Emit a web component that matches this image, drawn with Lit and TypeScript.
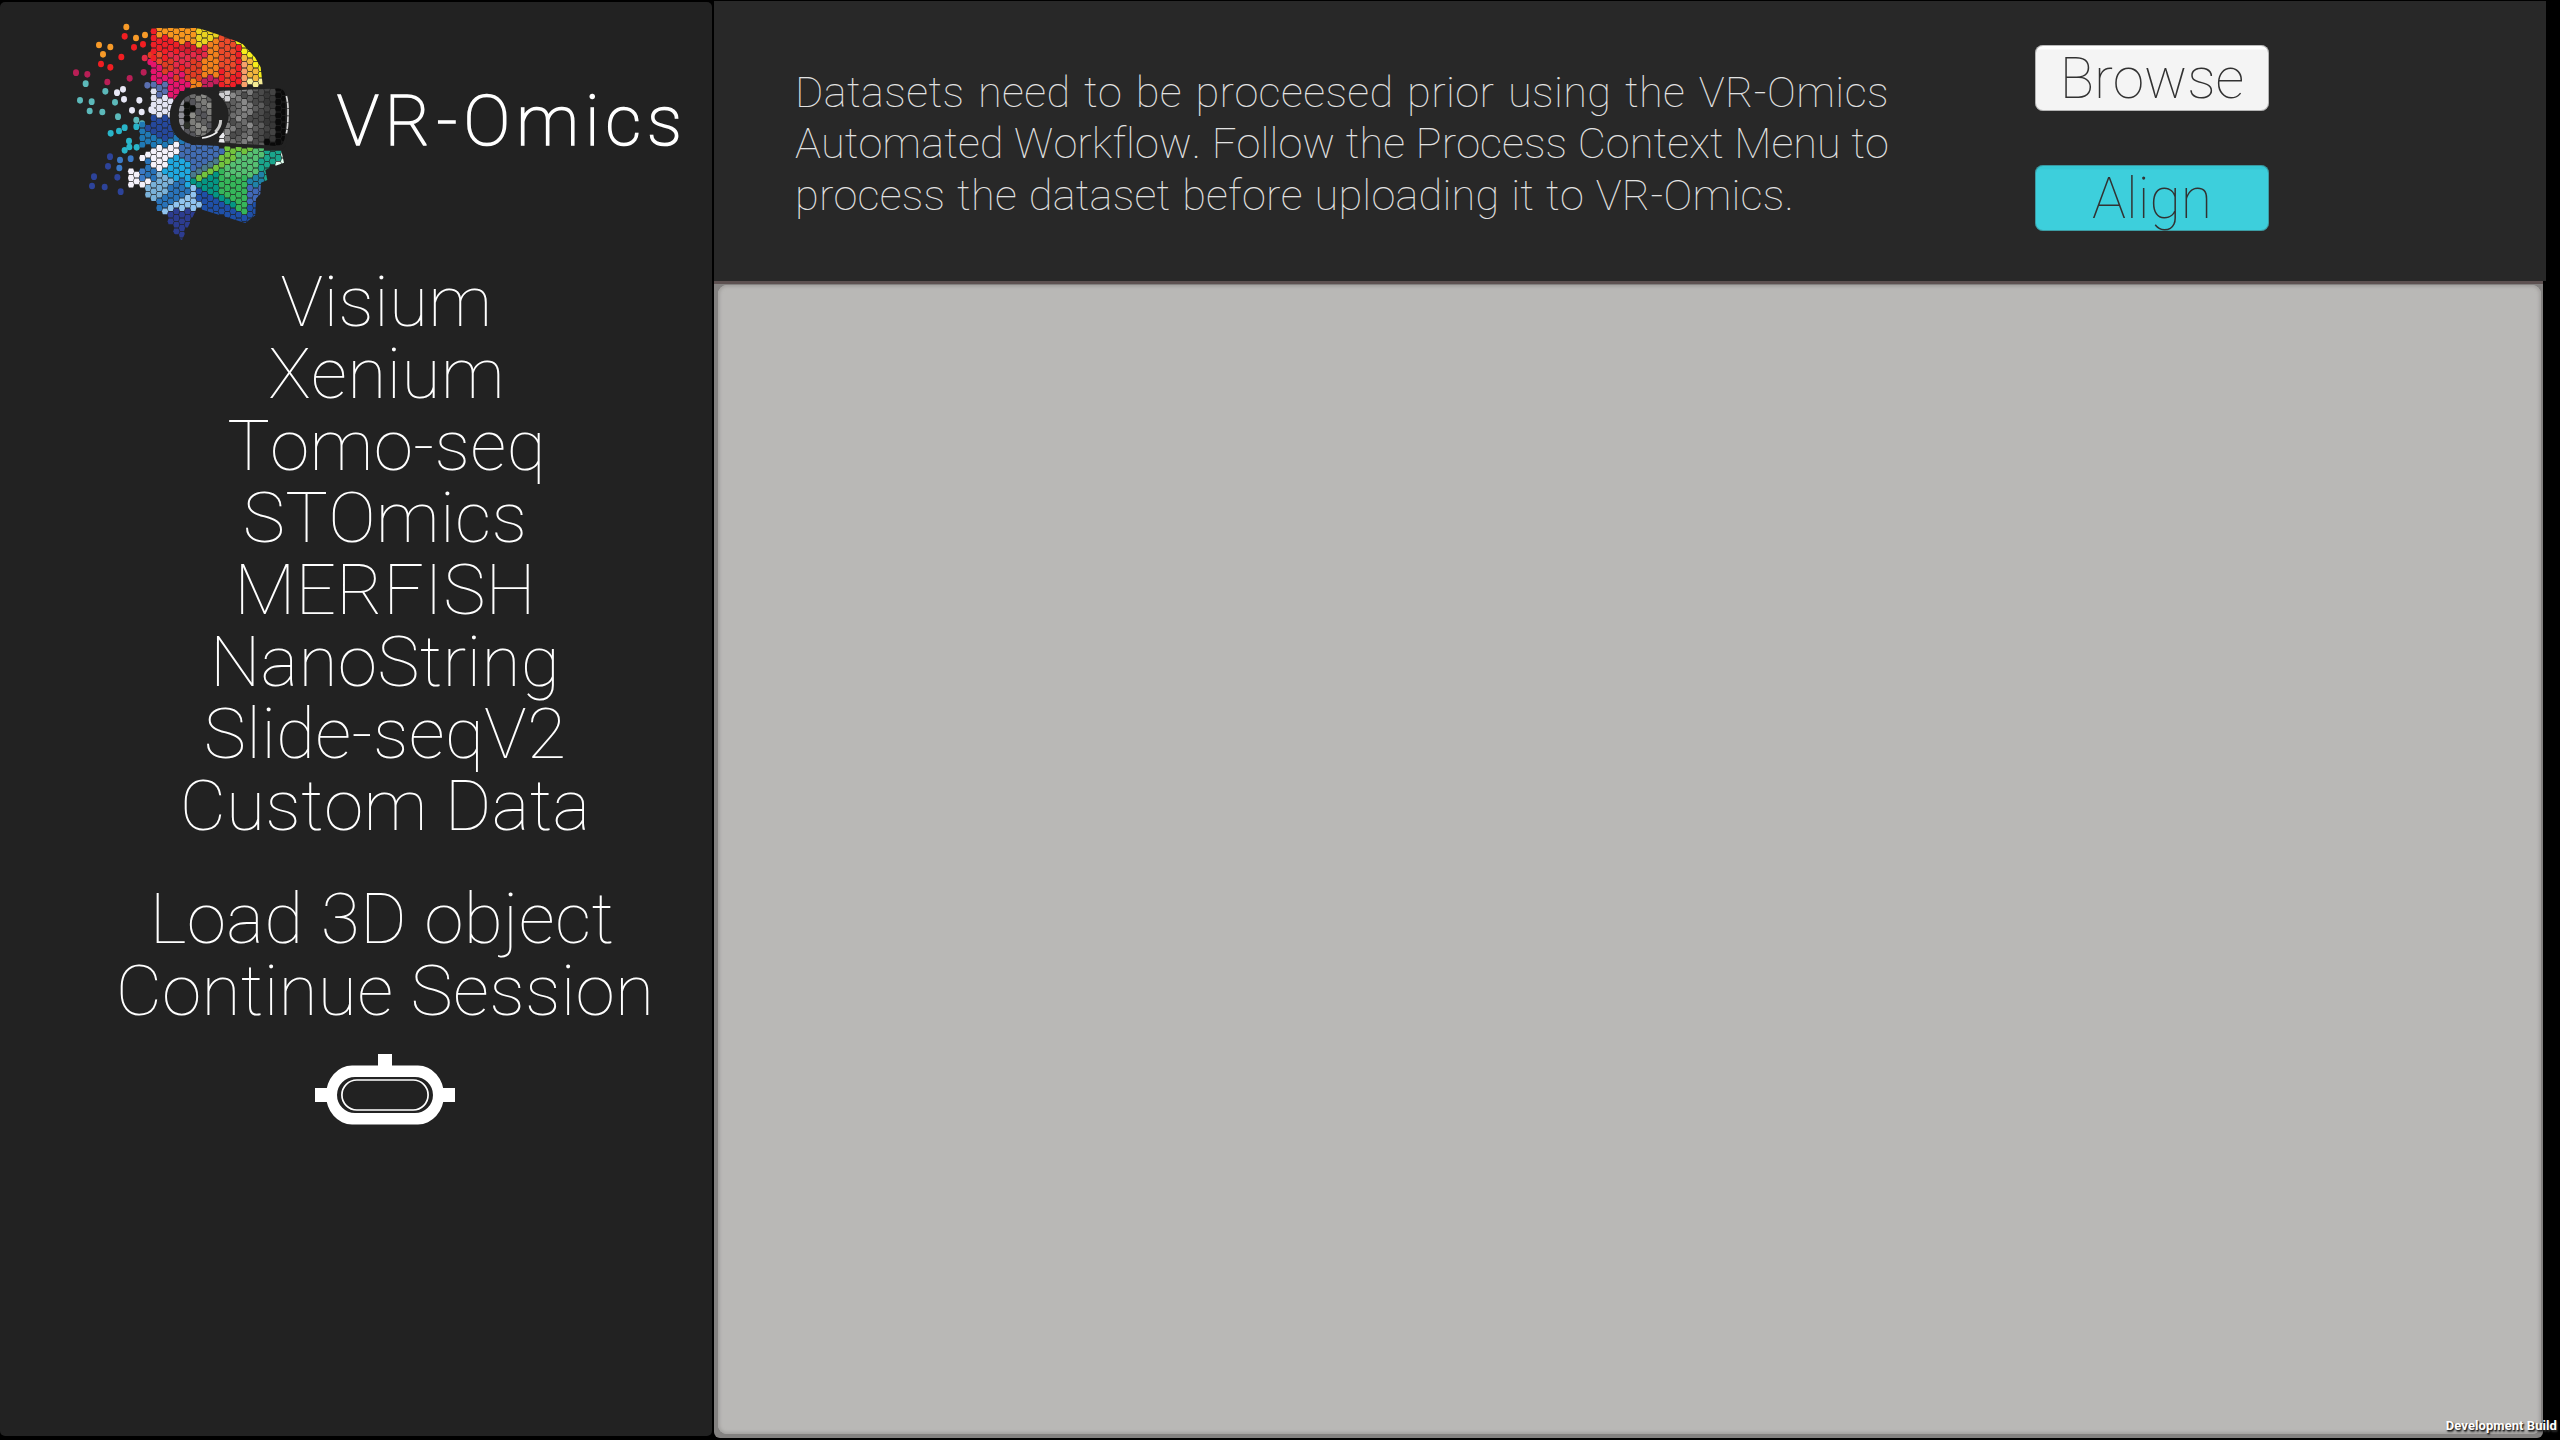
import { LitElement, html, svg, css } from "lit";
import { customElement } from "lit/decorators.js";

const PALETTE: Record<string, string> = {
  O: "#f7961e", Y: "#ead31f", R: "#ef1f27", C: "#e42a48", V: "#d31d2e", E: "#e03c24",
  T: "#f2801c", X: "#ec4a2a", P: "#f9a06a", G: "#f2b63c", L: "#f6ee1a", c: "#f5ec96",
  M: "#e5156c", m: "#c51f5b", N: "#e4e5f4", B: "#5a6fb0", D: "#25489c", H: "#2079b6",
  U: "#416cb2", A: "#f5f2fb", S: "#1fa8e0", Q: "#7ab2da", K: "#2973b9", J: "#90c4f0",
  I: "#2c3c90", s: "#4a7a8c", Z: "#049684", F: "#72c43e", g: "#55c072", e: "#35b65a",
  t: "#1aa58c", W: "#1f50a8", b: "#4068b8", a: "#1f82a8", w: "#e0fff0", k: "#3c7ac6",
};

/* One line per column: x, first y, then colour + the y it reaches ("." is a gap). */
const COLUMNS = `
213 474 A535
230 484 A525
247 345 H410 .432 A452 .474 k512 A536
264 215 .335 D362 H410 .422 A441 .450 K508 A524 Q570
281 50 O64 R148 M210 B228 N306 .312 D366 H412 A478 K508 Q574
298 50 O80 R130 X172 M218 B260 N318 D386 H412 A480 Q560 K595
315 50 O72 R150 E192 M216 B262 N316 D386 H410 A470 S488 Q556 K595 J615
332 50 O90 R128 C150 E190 M264 N316 D378 H400 A452 S496 Q532 K580 J604 I650
349 50 O104 R132 C188 E208 M270 .360 H388 A432 S512 K568 J604 I675
366 50 O100 V128 C156 R190 M248 .370 H402 U438 S512 K568 J602 I695
383 50 O104 V136 C168 E218 M240 .395 U460 S530 K554 J592 I660
400 50 O98 V118 C150 E208 T240 .395 U482 s504 Z526 J598 I630
417 50 O58 Y118 V132 C150 E208 T232 .400 U470 s490 F512 Z534 W572 J590
434 56 Y114 C140 T206 m236 .400 U464 s486 F508 Z544 W610
451 60 Y104 T192 m232 .400 U446 s468 F502 Z556 W610
468 66 Y78 T200 m230 .405 U438 s458 F490 Z566 W615
485 70 X168 R230 .405 U426 F482 e560 Z582 W620
502 76 X216 R236 .405 F464 g500 e564 Z588 W625
519 82 X200 R236 .405 F456 g494 e580 Z590 W635
536 92 L110 R230 .405 F432 g500 e598 W640
553 100 L130 G150 P228 .405 F430 g500 e616 W645
570 110 L152 G208 c228 .405 F420 g506 a530 b586 W640
587 120 L170 G206 c228 .405 g496 a530 b576 W625
604 140 L196 c228 .405 g440 t494 a522 b560
621 405 t510
638 405 t472
655 405 t458 w474
672 405 w465`.trim().split("\n").map((l) => l.split(" "));

const DOTS: [string, string][] = [
  ["#f79a28", "199,51 228,84 255,75 117,105 151,111 129,133"],
  ["#f01e22", "194,79 222,112 249,103 184,141 123,162 151,172"],
  ["#e32a45", "254,144"], ["#de4020", "272,135"], ["#e3156c", "271,156"],
  ["#b81f56", "48,188 82,193 142,216 209,205 251,187"],
  ["#5cb9ba", "77,221 136,244 60,271 95,275 165,277 89,303 127,306 174,320 229,330 246,341"],
  ["#e8e8f6", "189,238 171,248 192,268 238,271 216,301 245,306 274,299"],
  ["#29b5c9", "229,350 194,353 177,363 152,370 207,393 208,411 194,421 230,412"],
  ["#2d4399", "150,440 144,469 102,500 96,528 134,531 182,545 172,502"],
  ["#3c7ac6", "212,446 180,450 178,474"],
  ["#5a6fb0", "262,226"],
];

const hex = (x: number, y: number, fill: string) =>
  svg`<path d="M${x - 9.2} ${y}l2.8 -8.8h12.8l2.8 8.8l-2.8 8.8h-12.8z" fill=${fill}></path>`;

function mosaic() {
  const cells: unknown[] = [];
  COLUMNS.forEach(([x, start, ...runs], i) => {
    for (let y = (i % 2 ? 14 : 4) + 40; y < 700; y += 20) {
      if (y < +start - 6) continue;
      const run = runs.find((r) => y < +r.slice(1));
      if (!run || run[0] === ".") continue;
      cells.push(hex(+x, y, PALETTE[run[0]]));
    }
  });
  return cells;
}

const GREYS = ["#7c7c7c", "#5e5e5e", "#8a8a8a", "#4c4c4c", "#6c6c6c"];
function visor() {
  const cells: unknown[] = [];
  for (let i = 0; i < 13; i++) {
    const x = 485 + i * 17;
    for (let j = 0; j < 10; j++) {
      const y = 236 + j * 20 + (i % 2 ? 10 : 0);
      let fill = GREYS[(i * 3 + j * j + (j >> 1)) % 5];
      if (i < 2 && j < 2) fill = "#cfcfd2";
      else if (i < 1 && j > 5) fill = "#ececf0";
      else if (i > 9 || (i > 7 && j > 7)) fill = "#0a0a0a";
      else if (i > 7) fill = j % 3 ? "#383838" : "#444";
      else if (i > 5) fill = (i + j) % 3 ? "#4a4a4a" : "#5c5c5c";
      cells.push(hex(x, y, fill));
    }
  }
  return cells;
}

const LENS = ["#606060", "#7d7d7a", "#55555a", "#8c8c88", "#6c6c6c"];
function lens() {
  const cells: unknown[] = [];
  for (let i = 0; i < 6; i++) {
    for (let j = 0; j < 8; j++) {
      const x = 364 + i * 17, y = 256 + j * 20 + (i % 2 ? 10 : 0);
      let fill = LENS[(i * 2 + j * 3) % 5];
      if (i === 0) fill = "#8e8f96";
      if ((i === 1 && j > 0 && j < 4) || (i === 2 && j === 2)) fill = "#0d0f0c";
      if (i === 1 && j === 4) fill = "#2c3028";
      cells.push(hex(x, y, fill));
    }
  }
  return cells;
}

@customElement("vr-logo")
class VrLogo extends LitElement {
  static styles = css`
    :host { display: block; width: 240px; height: 240px; }
    svg { display: block; }
  `;
  render() {
    return html`<svg width="240" height="240" viewBox="0 0 720 720">
      <defs>
        <clipPath id="head"><path d="M200 54H414L470 72L526 92L548 102L585 142L602 172L608 224L612 400L612 422L664 422L672 458L628 474L616 480L622 510L603 518L601 552L588 566L586 616L556 639L420 597L404 608L366 690L354 684L256 566L254 534H200Z"></path></clipPath>
        <clipPath id="visor"><path d="M462 244L655 235Q676 236 677 262L676 370Q674 410 652 408L462 396Q505 350 506 318Q506 275 462 244Z"></path></clipPath>
        <clipPath id="lens"><path d="M455 268V358Q440 380 406 381Q356 370 355 316Q358 256 406 252Q436 250 455 268Z"></path></clipPath>
      </defs>
      ${DOTS.map(([c, pts]) => pts.split(" ").map((p) => {
        const [x, y] = p.split(",");
        return svg`<ellipse cx=${x} cy=${y} rx="9" ry="10" fill=${c}></ellipse>`;
      }))}
      <g clip-path="url(#head)">${mosaic()}</g>
      <path d="M418 232L662 231Q682 240 682 264L680 384Q680 416 662 418L420 405Q330 402 329 318Q331 238 418 232Z" fill="#222"></path>
      <g clip-path="url(#visor)">${visor()}</g>
      <path d="M679 258Q685 280 684 310Q684 350 679 370" fill="none" stroke="#d6d6d6" stroke-width="5" stroke-dasharray="18 2"></path>
      <circle cx="418" cy="318" r="86" fill="#222"></circle>
      <g clip-path="url(#lens)">${lens()}</g>
      <path d="M482 330Q482 350 466 366" fill="none" stroke="#c9c9c9" stroke-width="9"></path>
      <path d="M426 384Q450 382 472 366" fill="none" stroke="#f0f0f0" stroke-width="5"></path>
    </svg>`;
  }
}

@customElement("vr-headset")
class VrHeadset extends LitElement {
  static styles = css`
    :host { display: block; width: 140px; height: 71px; }
    svg { display: block; }
  `;
  render() {
    return html`<svg width="140" height="71" viewBox="0 0 140 71" fill="#fff">
      <rect x="63" y="0" width="14" height="13"></rect>
      <rect x="0" y="34" width="12" height="14"></rect>
      <rect x="128" y="34" width="12" height="14"></rect>
      <path fill-rule="evenodd" d="M37 11.5H103A26 29.5 0 0 1 103 70.5H37A26 29.5 0 0 1 37 11.5ZM40 23A18 18 0 0 0 40 59H100A18 18 0 0 0 100 23Z"></path>
      <rect x="26.9" y="26" width="86.2" height="30" rx="15" fill="none" stroke="#fff" stroke-width="1.7"></rect>
    </svg>`;
  }
}

@customElement("app-root")
class AppRoot extends LitElement {
  static styles = css`
    :host {
      display: grid;
      grid-template-columns: 714px 1fr;
      position: relative;
      width: 2560px;
      height: 1440px;
      overflow: hidden;
      background: #000;
      color: #fff;
      font: 100 71.3px/72px Roboto, sans-serif;
      font-variant-ligatures: none;
    }
    .sidebar {
      display: flex;
      flex-direction: column;
      margin: 2px 2px 4px 0;
      border-radius: 5px;
      background: #222;
    }
    .brand { display: flex; align-items: flex-start; gap: 37px; padding: 8px 0 0 60px; }
    .title {
      margin: 71px 0 0;
      font: 100 70px/80px Roboto, sans-serif;
      letter-spacing: 6.05px;
      white-space: nowrap;
      -webkit-text-stroke: 1.7px #fff;
      stroke-linejoin: round;
    }
    .menu {
      display: flex;
      flex-direction: column;
      width: 500px;
      margin: 16px 0 0 135px;
      text-align: center;
      white-space: nowrap;
      letter-spacing: 0.25px;
      font-kerning: none;
    }
    .nudge { padding-left: 3px; }
    .back { padding-right: 6px; }
    .session { width: 560px; margin: 41px 0 0 105px; }
    vr-headset { margin: 27px 0 0 315px; }
    .main { display: flex; flex-direction: column; }
    .header {
      display: flex;
      align-items: flex-start;
      box-sizing: border-box;
      width: 1832px;
      height: 280px;
      margin-top: 1px;
      padding-left: 81px;
      background: #282828;
    }
    .notice {
      width: 1094px;
      margin: 65.7px 0 0;
      color: #e2e2e2;
      font-size: 43.3px;
      line-height: 51.8px;
      letter-spacing: 0.2px;
      font-kerning: none;
      white-space: nowrap;
    }
    .line { display: block; text-align: justify; text-align-last: justify; }
    .line.loose { letter-spacing: 0.4px; }
    .line.tight { letter-spacing: 0.07px; }
    .line.last { width: 999px; }
    .actions { display: flex; flex-direction: column; gap: 54px; margin: 44px 0 0 146px; }
    .button {
      box-sizing: border-box;
      width: 234px;
      height: 66px;
      padding: 1px 0 0;
      border: 0;
      border-radius: 8px;
      background: linear-gradient(#fff 4px, #f4f4f4 5px);
      box-shadow: inset 0 0 0 1px rgba(60, 60, 60, 0.35);
      color: #323232;
      font: 100 57px/65px Roboto, sans-serif;
      text-align: center;
    }
    .align { background: linear-gradient(#36c8d5 4px, #3dcfdc 5px); }
    .canvas {
      box-sizing: border-box;
      width: 1829px;
      height: 1157px;
      border-top: 3px solid #5d5151;
      background: #838180;
      border-radius: 0 0 6px 6px;
      padding: 1px 2px 4px 4px;
    }
    .surface {
      height: 100%;
      border-radius: 9px;
      background: #b9b8b6;
      box-shadow: inset 0 0 3px 2px #a5a3a1;
    }
    .build {
      position: absolute;
      right: 3px;
      bottom: 5px;
      font: 700 13px/18px Roboto, sans-serif;
      letter-spacing: 0.07px;
      text-shadow: 1px 1px 1px #222, 1px 2px 2px #333;
    }
  `;
  render() {
    const datasets = ["Visium", "Xenium", "Tomo-seq", "STOmics", "MERFISH", "NanoString", "Slide-seqV2", "Custom Data"];
    return html`
      <div class="sidebar">
        <div class="brand"><vr-logo></vr-logo><h1 class="title">VR-Omics</h1></div>
        <div class="menu">${datasets.map((d, i) => html`<div class=${i < 3 ? "nudge" : ""}>${d}</div>`)}</div>
        <div class="menu session"><div class="back">Load 3D object</div><div>Continue Session</div></div>
        <vr-headset></vr-headset>
      </div>
      <div class="main">
        <div class="header">
          <p class="notice">
            <span class="line loose">Datasets need to be proceesed prior using the VR-Omics</span>
            <span class="line tight">Automated Workflow. Follow the Process Context Menu to</span>
            <span class="line last">process the dataset before uploading it to VR-Omics.</span>
          </p>
          <div class="actions">
            <button class="button">Browse</button>
            <button class="button align">Align</button>
          </div>
        </div>
        <div class="canvas"><div class="surface"></div></div>
      </div>
      <div class="build">Development Build</div>
    `;
  }
}
